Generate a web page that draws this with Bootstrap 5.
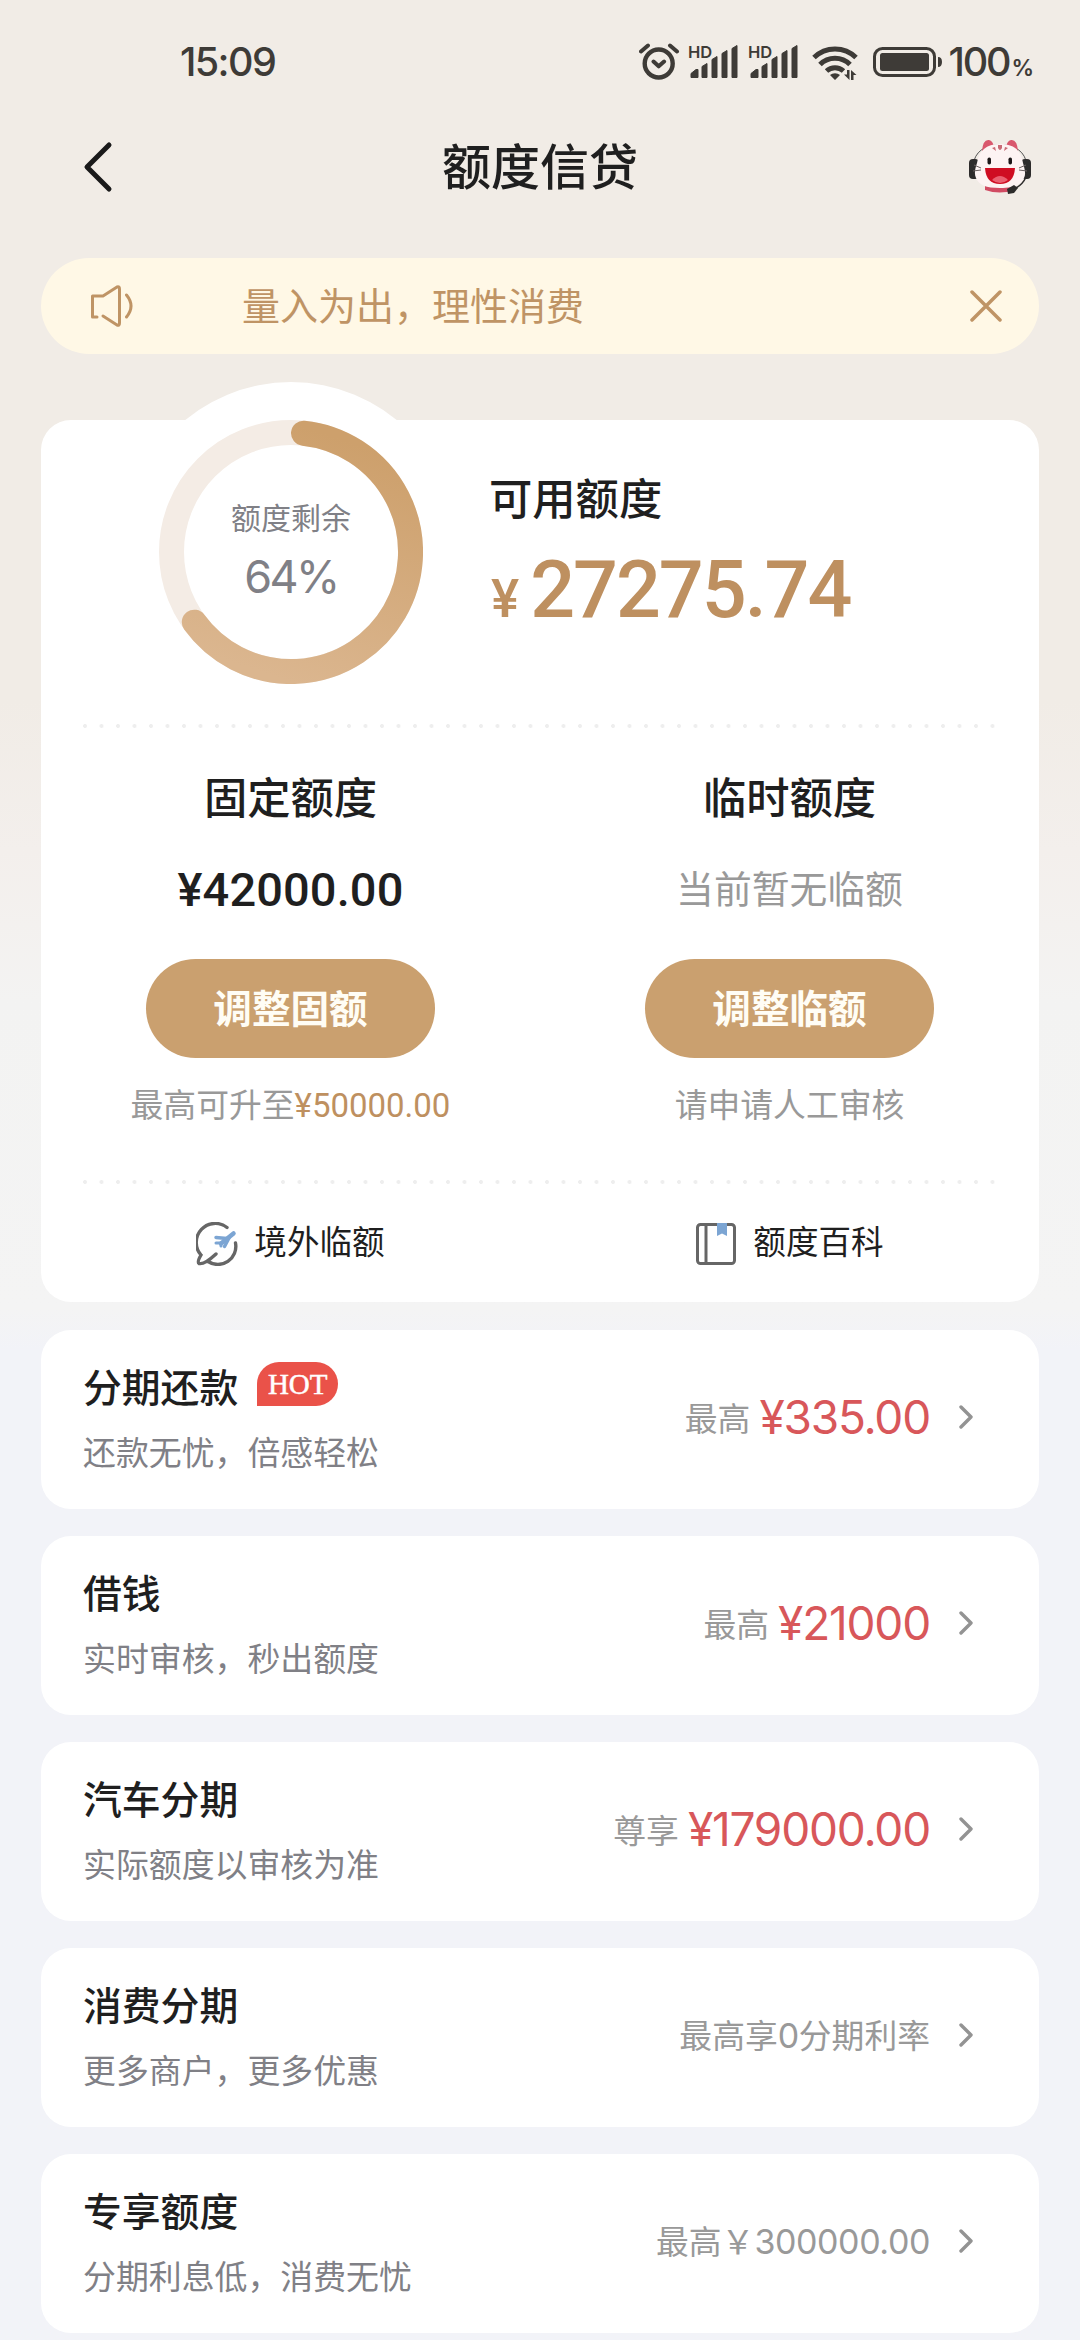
<!DOCTYPE html>
<html lang="zh-CN">
<head>
<meta charset="utf-8">
<meta name="viewport" content="width=device-width, initial-scale=1">
<title>额度信贷</title>
<link href="https://cdn.jsdelivr.net/npm/bootstrap@5.3.0/dist/css/bootstrap.min.css" rel="stylesheet">
<style>
  body{width:1080px;height:2340px;overflow:hidden;color:#1f1f1f;font-family:"Noto Sans CJK SC",sans-serif;
    background:linear-gradient(#f1ece6 0,#f1ece6 700px,#f3efec 850px,#f3f3f2 1000px,#f4f4f4 1310px,#f2f3f8 1350px,#f2f3f8 100%)}
  svg{display:block;flex:none}
  .num{font-family:Inter,sans-serif}
  .statusbar{height:124px;padding:0 46px 0 180px;color:#3e3b37}
  .clock{font-size:39.5px;line-height:124px;font-weight:500;letter-spacing:-1.6px}
  .sysicons{width:304px}
  .batt{font-size:39.5px;line-height:124px;letter-spacing:-2.2px;margin-left:6px;font-weight:500}
  .batt span{font-size:22.5px;line-height:0;letter-spacing:0;margin-left:2px;font-weight:600}
  .topnav{height:86px;padding:0 48px 0 83px}
  .topnav h1{font-size:49px;line-height:80px;height:86px;font-weight:500;padding-right:35px}
  .notice{height:96px;margin:48px 41px 0;padding:0 37px 0 48px;border-radius:48px;background:#fff8e6;color:#bf9465}
  .notice p{font-size:38px;line-height:92px;height:96px;margin-left:107px}
  .quota{height:882px;margin:66px 41px 0;border-radius:30px;background:#fff}
  .halo{left:84px;top:-38px;width:332px;height:332px;border-radius:50%;background:#fff}
  .summary{height:304px;padding:0 42px}
  .ring{width:264px;height:264px;margin-left:76px}
  .ringlabel{color:#808086;padding-bottom:7px}
  .ringlabel div:first-child{font-size:30px;line-height:40px}
  .ringlabel div:last-child{font-size:45px;line-height:50px;margin-top:16px;letter-spacing:-2.6px}
  .avail{margin-left:66px;padding-top:46px}
  .h-quota{font-size:43.3px;line-height:60px;font-weight:500}
  .avail .total{color:#be9060;font-weight:500;line-height:100px;font-size:79px;font-family:Roboto,sans-serif;margin-top:14px;padding-left:2px;letter-spacing:-2px}
  .avail .total .yen{font-size:53px;line-height:0;font-weight:500;margin-right:13px}
  .dots{height:4px;margin:0 42px;background:radial-gradient(circle at 2px 2px,#eee 1.8px,transparent 2.2px) 0 0/16.5px 4px repeat-x}
  .q-col{height:452px;padding-top:37px}
  .q-val{font-size:47px;line-height:60px;margin:35px 0 39px;font-weight:500;font-family:Roboto,sans-serif;letter-spacing:.1px}
  .q-none{font-size:37.8px;line-height:60px;margin:32px 0 42px;color:#999}
  .btn-gold{width:289px;height:99px;border:0;border-radius:50px;background:#caa06f;color:#fffdf5;font-size:38.6px;font-weight:700;line-height:1;padding:0 0 4px}
  .q-note{font-size:32.8px;line-height:46px;color:#999;margin-top:22px}
  .q-note span{color:#be9060;font-family:Roboto,sans-serif;font-size:33px}
  .q-link{height:119px;font-size:32.6px}
  .q-link span{padding-bottom:6px;margin-left:16px}
  .listing{margin:28px 41px 0;gap:27px}
  .item{height:179px;border-radius:30px;background:#fff;padding:0 66px 0 42px}
  .item-text{padding-bottom:7px}
  .item-side{padding-bottom:3px}
  .item h2{font-size:38.8px;line-height:54px;font-weight:500}
  .item p{font-size:32.9px;line-height:46px;margin-top:16px;color:#808086}
  .hot{width:81px;height:44px;margin:-1px 0 1px 19px;border-radius:22px 22px 22px 0;background:#ea5249;color:#fff;font:29px/44px "Liberation Serif",serif;-webkit-text-stroke:.5px #fff;text-align:center}
  .cap{font-size:32.8px;color:#999;padding-bottom:3px}
  .cap span{font-family:Inter,sans-serif;font-size:34px;letter-spacing:-.4px}
  .amt{font-family:Inter,sans-serif;font-size:46px;color:#d8575a;margin-left:9px;line-height:60px;padding-bottom:2px;letter-spacing:-1.2px}
  .chev{margin:0 0 3px 29px}
</style>
<script src="https://cdn.jsdelivr.net/npm/bootstrap@5.3.0/dist/js/bootstrap.bundle.min.js"></script>
</head>
<body>
<svg width="0" height="0" class="position-absolute">
  <defs>
    <g id="signal"><path d="M2 33v-4l5-4h2v8zM13 33V22l5-3v14zM23 33V15l5-3v21zM33 33V9l5-3v27zM43 33V4l5-3v32z" stroke-width="1" stroke="currentColor" stroke-linejoin="round" transform="translate(0 -1)"/></g>
    <path id="chev" d="M2 2 12 12 2 22" fill="none" stroke="#939393" stroke-width="3.400" stroke-linecap="round" stroke-linejoin="round"/>
  </defs>
</svg>

<header class="statusbar d-flex align-items-center justify-content-between">
  <div class="clock num">15:09</div>
  <div class="d-flex align-items-center">
    <svg class="sysicons" height="44" viewBox="640 40 304 44" fill="#3e3b37" color="#3e3b37">
      <circle cx="659.7" cy="63.5" r="14" fill="none" stroke="currentColor" stroke-width="4.4"/>
      <path d="m654.5 61.5 5.200 4.800 5.400-4.800M642 51.500l7-6M678 51.500l-7-6" fill="none" stroke="currentColor" stroke-width="4" stroke-linecap="round" stroke-linejoin="round"/>
      <text x="689" y="58" font-family="Inter,sans-serif" font-size="16.500" font-weight="600">HD</text>
      <use href="#signal" x="690" y="45.500"/>
      <text x="749" y="58" font-family="Inter,sans-serif" font-size="16.500" font-weight="600">HD</text>
      <use href="#signal" x="750" y="45.500"/>
      <g fill="none" stroke="currentColor" stroke-width="5">
        <path d="M815 57.500a30 30 0 0 1 42 0M821 64.500a21 21 0 0 1 30 0M827.500 71a12.500 12.500 0 0 1 17 0"/>
      </g>
      <path d="M831 75a7 5.500 0 0 1 10 0l-5 5zM845 74.500h3V70h2.500v10zM857.500 75h-3v5H852V70z"/>
      <rect x="875.500" y="48.500" width="60" height="27" rx="8" fill="none" stroke="currentColor" stroke-width="3"/>
      <rect x="881" y="53" width="49" height="18" rx="2.500"/>
      <path d="M939 57q4 0 4 5t-4 5z"/>
    </svg>
    <div class="batt num">100<span>%</span></div>
  </div>
</header>

<nav class="topnav d-flex align-items-center">
  <svg width="64" height="52" viewBox="0 0 64 52"><path d="M26 4 4 26l22 22" fill="none" stroke="#1a1a1a" stroke-width="5" stroke-linecap="round" stroke-linejoin="round"/></svg>
  <h1 class="m-0 flex-fill text-center">额度信贷</h1>
  <svg width="64" height="56" viewBox="0 0 64 56">
    <path d="M5 26Q8 6 32 6t27 20" fill="none" stroke="#555" stroke-width="1"/>
    <rect x="1" y="20" width="10" height="20" rx="4" fill="#2d2b2b"/><rect x="53" y="20" width="10" height="20" rx="4" fill="#2d2b2b"/>
    <path d="M17 46h29v5q-14 5-29 0z" fill="#d14b63"/>
    <path d="M14 12q1-12 7-11 4 1 5 7zM50 12q-1-12-7-11-4 1-5 7z" fill="#d9576d"/>
    <path d="M32 5c14 0 21 6 23 19 2 7 3 11 1 15-3 7-10 10-24 10S11 46 8 39c-2-4-1-9 1-15C11 12 18 5 32 5z" fill="#fdf3f3"/>
    <path d="M30 6h4v3q-2 4-4 0zM24 9l3-1 1 4zM40 9l-3-1-1 4z" fill="#c96a75"/>
    <rect x="19.500" y="18.500" width="3.500" height="7" rx="1.700" fill="#1c1718"/><rect x="40.500" y="18.500" width="3.500" height="7" rx="1.700" fill="#1c1718"/>
    <path d="M17 29h30q-1 16-15 16T17 29z" fill="#cf0d22"/><path d="M24 41q8-8 16 0-8 6-16 0z" fill="#ea6070"/>
    <path d="m6 26 7 3M5 32l8-1M58 26l-7 3M59 32l-8-1" stroke="#6a6060" stroke-width="1" fill="none"/>
    <path d="M58 38q-3 7-10 11" fill="none" stroke="#2d2b2b" stroke-width="1.500"/><path d="m39 50 7-4 4 3-4 5-6 1z" fill="#2d2b2b"/>
  </svg>
</nav>

<section class="notice d-flex align-items-center">
  <svg width="46" height="44" viewBox="0 0 46 44" fill="none" stroke="#bf9465" stroke-width="3" stroke-linecap="round" stroke-linejoin="round"><path d="M8 33H3.500V12H14L28 3q2.500-1 2.500 2v34q0 3-2.500 2l-14-9M37.500 11q9 11 0 22"/></svg>
  <p class="mb-0">量入为出，理性消费</p>
  <svg class="ms-auto" width="32" height="32" viewBox="0 0 32 32"><path d="m2 2 28 28M30 2 2 30" stroke="#bf9465" stroke-width="3.500" stroke-linecap="round"/></svg>
</section>

<section class="quota position-relative">
  <div class="halo position-absolute"></div>
  <div class="summary d-flex position-relative">
    <div class="ring position-relative d-flex align-items-center justify-content-center">
      <svg class="position-absolute top-0 start-0" width="264" height="264" viewBox="-132 -132 264 264" fill="none" stroke-width="25">
        <defs><linearGradient id="gold" x1=".6" y1="0" x2=".3" y2="1"><stop offset="0" stop-color="#cda06c"/><stop offset="1" stop-color="#dbb68f"/></linearGradient></defs>
        <circle r="119.500" stroke="#f4ece5"/>
        <path d="M12.500-118.800A119.500 119.500 0 1 1-96.700 70.200" stroke="url(#gold)" stroke-linecap="round"/>
      </svg>
      <div class="ringlabel text-center position-relative"><div>额度剩余</div><div class="num">64%</div></div>
    </div>
    <div class="avail">
      <div class="h-quota">可用额度</div>
      <div class="total"><span class="yen">¥</span>27275.74</div>
    </div>
  </div>
  <div class="dots"></div>
  <div class="row g-0">
    <div class="col-6 q-col d-flex flex-column align-items-center">
      <div class="h-quota">固定额度</div>
      <div class="q-val">¥42000.00</div>
      <button class="btn btn-gold">调整固额</button>
      <div class="q-note">最高可升至<span>¥50000.00</span></div>
    </div>
    <div class="col-6 q-col d-flex flex-column align-items-center">
      <div class="h-quota">临时额度</div>
      <div class="q-none">当前暂无临额</div>
      <button class="btn btn-gold">调整临额</button>
      <div class="q-note">请申请人工审核</div>
    </div>
  </div>
  <div class="dots"></div>
  <div class="row g-0">
    <div class="col-6 q-link d-flex align-items-center justify-content-center">
      <svg width="42" height="44" viewBox="0 0 42 44" fill="none" stroke="#666" stroke-width="3.400" stroke-linecap="round"><path d="M31 5.500A19 19 0 0 0 5 33Q1 40 3 41.500 8 43 20 32M39.500 21A18 18 0 0 1 12 39.500"/><g stroke="#7ca5d3" stroke-linejoin="round"><path d="M37.500 11.500 25 21.500" stroke-width="4.500"/><path d="m31 16.500-11-1M33 16l-4.500 8.500" stroke-width="3.500"/><path d="m25 21-5 0M25 21v3" stroke-width="3"/></g></svg>
      <span>境外临额</span>
    </div>
    <div class="col-6 q-link d-flex align-items-center justify-content-center">
      <svg width="42" height="44" viewBox="0 0 42 44" fill="none" stroke="#666" stroke-width="3"><rect x="2.500" y="2.500" width="37" height="39" rx="3"/><path d="M11 3v38"/><path d="M22 1h10v13l-5-2.500-5 2.500z" fill="#7ca5d3" stroke="none"/></svg>
      <span>额度百科</span>
    </div>
  </div>
</section>

<main class="listing d-flex flex-column">
  <article class="item d-flex align-items-center justify-content-between">
    <div class="item-text"><div class="d-flex align-items-center"><h2 class="m-0">分期还款</h2><span class="hot">HOT</span></div><p class="mb-0">还款无忧，倍感轻松</p></div>
    <div class="item-side d-flex align-items-center"><span class="cap">最高</span><span class="amt">¥335.00</span><svg class="chev" width="14" height="24"><use href="#chev"/></svg></div>
  </article>
  <article class="item d-flex align-items-center justify-content-between">
    <div class="item-text"><h2 class="m-0">借钱</h2><p class="mb-0">实时审核，秒出额度</p></div>
    <div class="item-side d-flex align-items-center"><span class="cap">最高</span><span class="amt">¥21000</span><svg class="chev" width="14" height="24"><use href="#chev"/></svg></div>
  </article>
  <article class="item d-flex align-items-center justify-content-between">
    <div class="item-text"><h2 class="m-0">汽车分期</h2><p class="mb-0">实际额度以审核为准</p></div>
    <div class="item-side d-flex align-items-center"><span class="cap">尊享</span><span class="amt">¥179000.00</span><svg class="chev" width="14" height="24"><use href="#chev"/></svg></div>
  </article>
  <article class="item d-flex align-items-center justify-content-between">
    <div class="item-text"><h2 class="m-0">消费分期</h2><p class="mb-0">更多商户，更多优惠</p></div>
    <div class="item-side d-flex align-items-center"><span class="cap">最高享<span>0</span>分期利率</span><svg class="chev" width="14" height="24"><use href="#chev"/></svg></div>
  </article>
  <article class="item d-flex align-items-center justify-content-between">
    <div class="item-text"><h2 class="m-0">专享额度</h2><p class="mb-0">分期利息低，消费无忧</p></div>
    <div class="item-side d-flex align-items-center"><span class="cap">最高￥<span>300000.00</span></span><svg class="chev" width="14" height="24"><use href="#chev"/></svg></div>
  </article>
</main>
</body>
</html>
